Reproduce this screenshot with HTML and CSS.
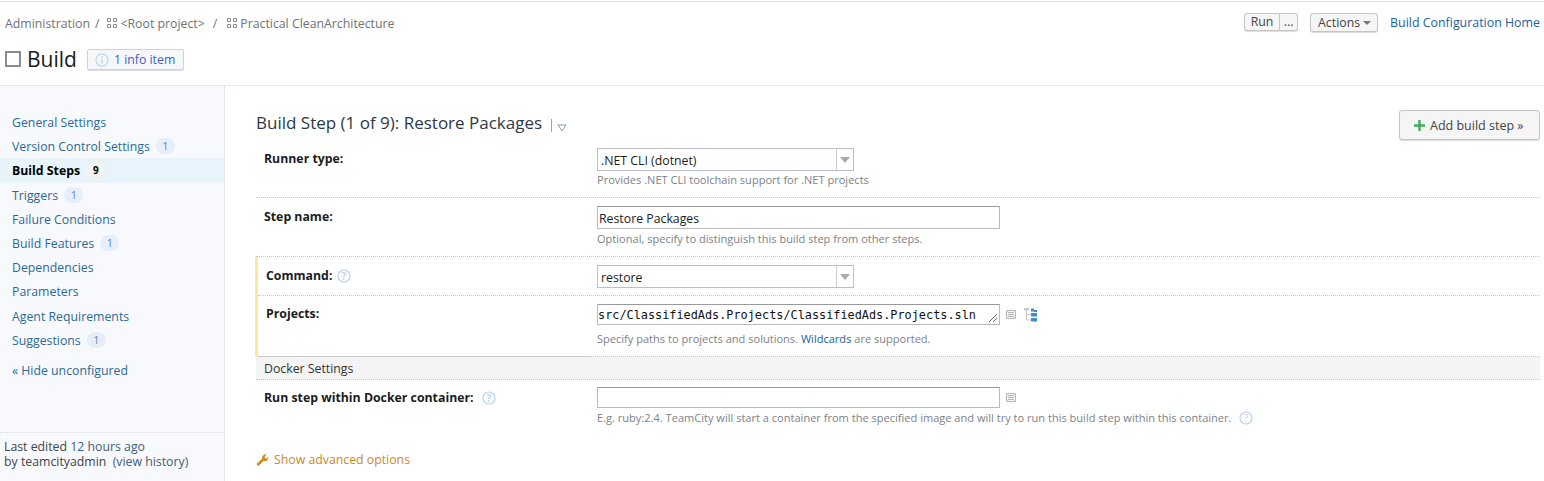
FILE: index.html
```html
<!DOCTYPE html>
<html lang="en">
<head>
  <meta charset="UTF-8" />
  <title>Build Step - Restore Packages</title>
  <link rel="stylesheet" href="styles.css">
</head>
<body>
  <header class="top">
    <div class="top-row">
      <div class="crumbs">
        <span>Administration</span><i class="sep">/</i>
        <svg class="proj" width="10" height="10" viewBox="0 0 10 10"><path d="M.5.5h3v3h-3zM6.500.5h3v3h-3zM.5 6.500h3v3h-3zM6.500 6.500h3v3h-3z" fill="none" stroke="#888"/></svg>
        <span>&lt;Root project&gt;</span><i class="sep sep-wide">/</i>
        <svg class="proj" width="10" height="10" viewBox="0 0 10 10"><path d="M.5.5h3v3h-3zM6.500.5h3v3h-3zM.5 6.500h3v3h-3zM6.500 6.500h3v3h-3z" fill="none" stroke="#888"/></svg>
        <span>Practical CleanArchitecture</span>
      </div>
      <div class="top-actions">
        <div class="btn-group"><span class="btn">Run</span><span class="btn btn-more">...</span></div>
        <span class="btn btn-actions">Actions <b class="caret"></b></span>
        <a class="home">Build Configuration Home</a>
      </div>
    </div>
    <div class="title-row">
      <span class="check"></span>
      <h1>Build</h1>
      <span class="info-item">
        <svg width="14" height="14" viewBox="0 0 15 15"><circle cx="7.500" cy="7.500" r="6.500" fill="none" stroke="#bcd3ea" stroke-width="1.200"/><path d="M7.500 3.500v1.500M7.500 6.500v5" stroke="#bcd3ea" stroke-width="1.500"/></svg>
        1 info item
      </span>
    </div>
  </header>

  <div class="page">
    <aside class="side">
      <nav class="menu">
        <a>General Settings</a>
        <a>Version Control Settings <span class="count">1</span></a>
        <a class="active">Build Steps <span class="count">9</span></a>
        <a>Triggers <span class="count">1</span></a>
        <a>Failure Conditions</a>
        <a>Build Features <span class="count">1</span></a>
        <a>Dependencies</a>
        <a>Parameters</a>
        <a>Agent Requirements</a>
        <a>Suggestions <span class="count">1</span></a>
        <a class="hide-link">« Hide unconfigured</a>
      </nav>
      <div class="edited">
        Last edited <a>12 hours ago</a><br>
        by teamcityadmin&nbsp; <a>(view history)</a>
      </div>
    </aside>

    <main class="content">
      <div class="step-head">
        <h2>Build Step (1 of 9): Restore Packages <span class="step-menu"><svg width="10" height="8" viewBox="0 0 10 8"><path d="M1 1h8L5 7z" fill="none" stroke="#8a9aa8"/></svg></span></h2>
        <span class="btn btn-add">
          <svg width="11" height="11" viewBox="0 0 11 11"><path d="M4.300 0h2.400v4.300H11v2.400H6.700V11H4.300V6.700H0V4.300h4.300z" fill="#45ad5f"/></svg>
          Add build step »
        </span>
      </div>

      <div class="row row-runner">
        <label>Runner type:</label>
        <div class="val">
          <div class="select"><span>.NET CLI (dotnet)</span><i></i></div>
          <p class="note">Provides .NET CLI toolchain support for .NET projects</p>
        </div>
      </div>
      <div class="row row-name">
        <label>Step name:</label>
        <div class="val">
          <div class="input">Restore Packages</div>
          <p class="note">Optional, specify to distinguish this build step from other steps.</p>
        </div>
      </div>

      <div class="changed">
        <div class="row row-command">
          <label>Command: <svg class="help" width="14" height="14" viewBox="0 0 14 14"><circle cx="7" cy="7" r="6" fill="none" stroke="#bcd3ea" stroke-width="1.200"/><text x="7" y="10.500" text-anchor="middle">?</text></svg></label>
          <div class="val">
            <div class="select"><span>restore</span><i></i></div>
          </div>
        </div>
        <div class="row row-projects">
          <label>Projects:</label>
          <div class="val">
            <div class="with-icons">
              <div class="input mono">src/ClassifiedAds.Projects/ClassifiedAds.Projects.sln
                <svg class="grip" width="10" height="10" viewBox="0 0 10 10"><path d="M1 9l8-8M5 9l4-4" stroke="#666"/></svg>
              </div>
              <svg width="10" height="9" viewBox="0 0 10 9"><path d="M.5.500h9v8h-9z" fill="#f2f2f2" stroke="#b5b5b5"/><path d="M2 2.500h6M2 4.500h6M2 6.500h6" stroke="#b5b5b5"/></svg>
              <svg class="tree" width="13" height="14" viewBox="0 0 13 14"><path d="M2.500 2v10h4M2.500 6.500h4" fill="none" stroke="#c4c4c4"/><path d="M0 0h5v2.500H0z" fill="#c9c9c9"/><path d="M7 .5h3v3H7zM10 2h3v2h-3zM7 5h6v3.500H7zM7 10h6v3.500H7z" fill="#3f8fc6"/></svg>
            </div>
            <p class="note">Specify paths to projects and solutions. <a>Wildcards</a> are supported.</p>
          </div>
        </div>
      </div>

      <div class="group-head">Docker Settings</div>
      <div class="row row-docker">
        <label>Run step within Docker container: <svg class="help help-far" width="14" height="14" viewBox="0 0 14 14"><circle cx="7" cy="7" r="6" fill="none" stroke="#bcd3ea" stroke-width="1.200"/><text x="7" y="10.500" text-anchor="middle">?</text></svg></label>
        <div class="val">
          <div class="with-icons">
            <div class="input input-empty"></div>
            <svg width="10" height="9" viewBox="0 0 10 9"><path d="M.5.500h9v8h-9z" fill="#f2f2f2" stroke="#b5b5b5"/><path d="M2 2.500h6M2 4.500h6M2 6.500h6" stroke="#b5b5b5"/></svg>
          </div>
          <p class="note">E.g. ruby:2.4. TeamCity will start a container from the specified image and will try to run this build step within this container. <svg class="help help-far" width="14" height="14" viewBox="0 0 14 14"><circle cx="7" cy="7" r="6" fill="none" stroke="#bcd3ea" stroke-width="1.200"/><text x="7" y="10.500" text-anchor="middle">?</text></svg></p>
        </div>
      </div>

      <a class="advanced">
        <svg width="13" height="13" viewBox="0 0 13 13"><path d="M1 10.500L6 5.800C5.400 3.500 7.500.8 10.800 1.200L8.600 3.400l.6 1.800 1.800.5 1.300-2.200c.6 3-1.900 5.200-4.800 4.500L3 12.500c-1 .8-2.800-.8-2-2z" fill="#d08a1d"/></svg>
        Show advanced options
      </a>
    </main>
  </div>
</body>
</html>
```

FILE: styles.css
```css
* {
  margin: 0;
  padding: 0;
  box-sizing: border-box;
}

html, body {
  height: 481px;
  overflow: hidden;
}

body {
  font-family: "Open Sans", "Noto Sans", sans-serif;
  font-size: 12.3px;
  color: #222;
  background: #fff;
}

a {
  color: #1a6199;
  text-decoration: none;
}

.top {
  height: 85px;
  border-top: 1px solid #e3e3e6;
  margin-top: 1px;
  border-bottom: 1px solid #e3e5ea;
  padding: 0 4px 0 5px;
}

.top-row {
  display: flex;
  justify-content: space-between;
  align-items: center;
  height: 40px;
}

.crumbs {
  display: flex;
  align-items: center;
  padding-top: 2px;
  color: #6d7378;
  white-space: nowrap;
}

.sep {
  font-style: normal;
  margin: 0 8px 0 5px;
}

.sep-wide {
  margin: 0 10px 0 8px;
}

.proj {
  margin-right: 3px;
}

.top-actions {
  display: flex;
  align-items: center;
}

.home {
  font-size: 12.4px;
}

.btn {
  display: inline-block;
  background: #f6f6f6;
  border: 1px solid #c4c4c4;
  border-radius: 3px;
  box-shadow: 0 1px 1px #ddd;
  color: #444;
  white-space: nowrap;
}

.btn-group {
  display: flex;
  margin-right: 12px;
}

.btn-group .btn {
  width: 36px;
  height: 18px;
  line-height: 16px;
  text-align: center;
  border-radius: 3px 0 0 3px;
}

.btn-group .btn-more {
  width: 18px;
  border-left: 0;
  border-radius: 0 3px 3px 0;
}

.btn-actions {
  width: 68px;
  height: 19px;
  line-height: 17px;
  padding-left: 7px;
  margin-right: 12px;
}

.caret {
  display: inline-block;
  border: 4px solid transparent;
  border-top: 4px solid #777;
  border-bottom: 0;
  vertical-align: middle;
}

.title-row {
  display: flex;
  align-items: center;
  height: 33px;
}

.check {
  width: 16px;
  height: 16px;
  border: 2px solid #8c8c8c;
  margin-right: 6px;
}

h1 {
  font-size: 21px;
  font-weight: 500;
  color: #1a1a1a;
  margin-right: 10px;
}

.info-item {
  display: flex;
  align-items: center;
  gap: 5px;
  height: 21px;
  padding: 1px 8px 0 7px;
  margin-top: 1px;
  background: #f5f7fa;
  border: 1px solid #cfd3d8;
  border-radius: 2px;
  box-shadow: 0 1px 1px #ddd;
  color: #3d63c5;
}

.page {
  display: flex;
  height: 395px;
}

.side {
  width: 225px;
  flex: none;
  display: flex;
  flex-direction: column;
  background: #f8f9fc;
  border-right: 1px solid #e1e6ee;
}

.menu {
  padding-top: 24px;
  flex: 1;
}

.menu a {
  display: block;
  height: 24.200px;
  line-height: 25px;
  padding-left: 12px;
  color: #2a6a94;
  white-space: nowrap;
}

.menu a.active {
  background: #e8f3fc;
  color: #000;
  font-weight: 700;
}

.menu .hide-link {
  margin-top: 6px;
}

.count {
  display: inline-block;
  min-width: 19px;
  height: 16px;
  line-height: 16px;
  margin-left: 3px;
  border-radius: 8px;
  background: #e5eef9;
  color: #5a7cb8;
  font-size: 10px;
  font-weight: 400;
  text-align: center;
  vertical-align: 1px;
}

.active .count {
  background: #f3f3f0;
  color: #000;
  font-weight: 700;
}

.edited {
  height: 49px;
  padding: 6px 0 0 4px;
  border-top: 1px dotted #dcdcdc;
  line-height: 15px;
  color: #444;
}

.edited a {
  color: #3e5f78;
}

.content {
  flex: 1;
  padding: 0 4px 0 31px;
  min-width: 0;
}

.step-head {
  display: flex;
  justify-content: space-between;
  align-items: flex-start;
  height: 57px;
}

h2 {
  font-size: 17px;
  font-weight: 400;
  color: #2b3a45;
  margin-top: 25px;
  line-height: 24px;
}

.step-menu {
  display: inline-block;
  border-left: 1px solid #9aa5ae;
  height: 13px;
  line-height: 13px;
  margin-left: 4px;
  padding-left: 5px;
  vertical-align: -3px;
}

.btn-add {
  display: flex;
  align-items: center;
  gap: 5px;
  height: 30px;
  width: 141px;
  margin-top: 24px;
  padding-left: 14px;
  background: #f5f5f5;
  font-size: 12.5px;
  color: #444;
}

.row {
  display: grid;
  grid-template-columns: 341px 1fr;
  border-bottom: 1px dotted #c4c4c4;
}

.row label {
  padding-left: 8px;
  font-weight: 700;
  color: #1c1c1c;
  white-space: nowrap;
}

.row-runner {
  height: 55px;
  padding-top: 5px;
}

.row-name {
  height: 59px;
  padding-top: 8px;
}

.row-runner label,
.row-name label {
  padding-top: 2px;
}

.row-runner .note {
  margin-top: 0;
}

.row-name .note {
  margin-top: 1px;
}

.changed {
  border-left: 3px solid #fbe7a2;
  margin-left: -1px;
}

.changed .row {
  grid-template-columns: 339px 1fr;
}

.row-command {
  height: 39px;
  padding-top: 8px;
}

.row-command label {
  padding-top: 2px;
}

.row-projects {
  height: 61px;
  padding-top: 8px;
}

.row-projects label {
  padding-top: 1px;
  margin-right: 7px;
  margin-bottom: -1px;
  border-bottom: 1px solid #c9c9c9;
}

.row-docker {
  border-bottom: 0;
  padding-top: 7px;
  height: 66px;
}

.row-docker label {
  padding-top: 2px;
}

.select {
  display: flex;
  width: 257px;
  height: 23px;
  border: 1px solid #b9bfd0;
  background: #fff;
  line-height: 23px;
  padding-left: 3px;
  justify-content: space-between;
  color: #1c1c1c;
}

.select i {
  width: 17px;
  border-left: 1px solid #c7ccd6;
  position: relative;
}

.select i::after {
  content: "";
  position: absolute;
  left: 3px;
  top: 8px;
  border: 5px solid transparent;
  border-top: 6px solid #aaa;
  border-bottom: 0;
}

.input {
  position: relative;
  width: 403px;
  height: 23px;
  border: 1px solid #bbb;
  border-top-color: #999;
  line-height: 23px;
  padding-left: 1px;
  color: #1c1c1c;
  background: #fff;
}

.input.mono {
  height: 21px;
  line-height: 21px;
  padding-left: 0;
  font-family: "DejaVu Sans Mono", monospace;
  font-size: 11.85px;
  color: #111;
  white-space: nowrap;
}

.input-empty {
  height: 21px;
}

.grip {
  position: absolute;
  right: 1px;
  bottom: 1px;
}

.with-icons {
  display: flex;
  align-items: center;
  gap: 6px;
}

.tree {
  margin-left: 2px;
}

.note {
  margin-top: 1px;
  color: #7d8287;
  font-size: 11.05px;
  line-height: 17px;
  white-space: nowrap;
}

.row-projects .note {
  margin-top: 5px;
}

.note a {
  color: #1a6199;
}

.help text {
  font-size: 10px;
  fill: #bcd3ea;
}

.help {
  vertical-align: -3px;
  margin-left: 1px;
}

.help-far {
  margin-left: 5px;
}

.group-head {
  height: 23px;
  line-height: 22px;
  padding: 1px 0 0 8px;
  background: #f4f4f4;
  border-bottom: 1px dotted #c4c4c4;
  color: #333;
}

.advanced {
  display: flex;
  align-items: center;
  gap: 5px;
  color: #c98a2b;
  margin-top: 5px;
}
```
